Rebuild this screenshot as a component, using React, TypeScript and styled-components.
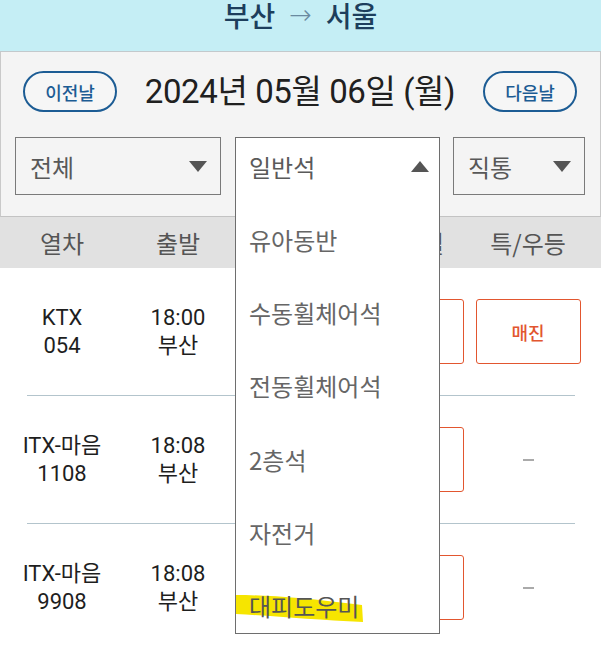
import React from "react";
import styled, { createGlobalStyle } from "styled-components";

const Global = createGlobalStyle`
  html, body { margin: 0; padding: 0; background: #ffffff; }
  body {
    width: 601px;
    height: 645px;
    overflow: hidden;
    font-family: Roboto, "Noto Sans CJK KR", sans-serif;
  }
  * { box-sizing: border-box; }
`;

const Page = styled.div`
  width: 601px;
  display: flex;
  flex-direction: column;
`;

const TitleBar = styled.header`
  height: 52px;
  flex: none;
  background: #c5eef5;
  border-bottom: 1px solid #c3c9cc;
  display: flex;
  justify-content: center;
  align-items: flex-start;
  gap: 10px;
  font-size: 28px;
  line-height: 30px;
  font-weight: 500;
  color: #1d3e5c;
  font-family: "Noto Sans CJK KR", sans-serif;
  overflow: hidden;
`;

const Arrow = styled.span`
  color: #6a8aa0;
  font-weight: 300;
  font-family: "DejaVu Sans", sans-serif;
  font-size: 27px;
  padding: 0 4px;
`;

const Panel = styled.section`
  background: #f4f4f4;
  border-left: 1px solid #c9c9c9;
  border-right: 1px solid #c9c9c9;
  border-bottom: 1px solid #c3c3c3;
  padding: 19px 0 21px;
  display: flex;
  flex-direction: column;
  gap: 25px;
`;

const DateRow = styled.div`
  height: 41px;
  padding: 0 23px 0 22px;
  display: flex;
  align-items: center;
  justify-content: space-between;
`;

const Pill = styled.button`
  width: 94px;
  height: 41px;
  border: 2px solid #1c5c94;
  border-radius: 21px;
  background: #f6f6f6;
  color: #1c5c94;
  font-size: 18px;
  font-weight: 500;
  font-family: "Noto Sans CJK KR", sans-serif;
  padding: 0;
  display: flex;
  align-items: center;
  justify-content: center;
`;

const DateText = styled.div`
  font-size: 33px;
  color: #202020;
  letter-spacing: -0.4px;
  font-family: Roboto, "Noto Sans CJK KR", sans-serif;
  line-height: 41px;
`;

const SelectRow = styled.div`
  padding: 0 13px 0 14px;
  display: grid;
  grid-template-columns: 206px 204px 132px;
  gap: 14px;
  height: 58px;
`;

const SelectBox = styled.div`
  position: relative;
  height: 58px;
  border: 1.5px solid #7a7a7a;
  background: #f4f4f4;
  display: flex;
  align-items: center;
  justify-content: space-between;
  padding: 0 13px 0 14px;
  font-size: 24px;
  color: #585858;
  font-family: "Noto Sans CJK KR", sans-serif;
`;

const Caret = styled.span<{ $up?: boolean }>`
  width: 0;
  height: 0;
  border-left: 9px solid transparent;
  border-right: 9px solid transparent;
  ${(p) =>
    p.$up
      ? "border-bottom: 11px solid #555;"
      : "border-top: 11px solid #555;"}
`;

const SelectSlot = styled.div`
  position: relative;
  height: 58px;
`;

const Dropdown = styled.div`
  position: absolute;
  top: 0;
  left: 0;
  width: 205px;
  height: 497px;
  background: #ffffff;
  border: 1.5px solid #6e6e6e;
  overflow: hidden;
  z-index: 10;
  display: flex;
  flex-direction: column;
  font-family: "Noto Sans CJK KR", sans-serif;
`;

const DropHead = styled.div`
  height: 57px;
  flex: none;
  display: flex;
  align-items: center;
  justify-content: space-between;
  padding: 0 10px 0 13px;
  font-size: 24px;
  color: #5a5a5a;
`;

const DropList = styled.ul`
  list-style: none;
  margin: 0;
  padding: 8px 0 0;
`;

const DropItem = styled.li`
  position: relative;
  height: 73.2px;
  display: flex;
  align-items: center;
  padding-left: 13px;
  font-size: 24px;
  color: #666666;
`;

const ItemLabel = styled.span<{ $marked?: boolean }>`
  position: relative;
  z-index: 1;
  color: ${(p) => (p.$marked ? "#555" : "#666")};
`;

const Marker = styled.svg`
  position: absolute;
  left: 0;
  top: 0;
  z-index: 0;
`;

const TableHead = styled.div`
  height: 51px;
  background: #e1e1e1;
  display: grid;
  grid-template-columns: 116px 116px 116px 118px 116px;
  padding-left: 4px;
  align-items: center;
  font-size: 24px;
  color: #555555;
  font-family: "Noto Sans CJK KR", sans-serif;
`;

const HeadCell = styled.div`
  text-align: center;
  white-space: nowrap;
`;

const Row = styled.div`
  height: 127px;
  display: grid;
  grid-template-columns: 116px 116px 116px 118px 116px;
  padding-left: 4px;
  align-items: center;
`;

const Cell = styled.div`
  display: flex;
  flex-direction: column;
  align-items: center;
  font-size: 22px;
  line-height: 28px;
  color: #1e1e1e;
  font-family: Roboto, "Noto Sans CJK KR", sans-serif;
`;

const SeatButton = styled.button`
  width: 105px;
  height: 65px;
  border: 1.5px solid #e2562f;
  border-radius: 3px;
  background: #ffffff;
  color: #e2562f;
  font-size: 18px;
  font-weight: 500;
  font-family: "Noto Sans CJK KR", sans-serif;
  padding: 0;
  justify-self: center;
`;

const Dash = styled.div`
  justify-self: center;
  width: 11px;
  height: 2px;
  background: #aaaaaa;
`;

const Divider = styled.div`
  height: 1px;
  margin: 0 26px 0 27px;
  background: #b3c4cc;
`;

type Train = {
  name: string;
  no: string;
  dep: string;
  premium: string | null;
};

const trains: Train[] = [
  { name: "KTX", no: "054", dep: "18:00", premium: "매진" },
  { name: "ITX-마음", no: "1108", dep: "18:08", premium: null },
  { name: "ITX-마음", no: "9908", dep: "18:08", premium: null },
];

const seatOptions = ["유아동반", "수동휠체어석", "전동휠체어석", "2층석", "자전거", "대피도우미"];

export default function App() {
  return (
    <Page>
      <Global />
      <TitleBar>
        <span>부산</span>
        <Arrow>→</Arrow>
        <span>서울</span>
      </TitleBar>
      <Panel>
        <DateRow>
          <Pill>이전날</Pill>
          <DateText>2024년 05월 06일 (월)</DateText>
          <Pill>다음날</Pill>
        </DateRow>
        <SelectRow>
          <SelectBox>
            <span>전체</span>
            <Caret />
          </SelectBox>
          <SelectSlot>
            <Dropdown>
              <DropHead>
                <span>일반석</span>
                <Caret $up />
              </DropHead>
              <DropList>
                {seatOptions.map((o) => {
                  const marked = o === "대피도우미";
                  return (
                    <DropItem key={o}>
                      {marked && (
                        <Marker width="130" height="60" viewBox="0 0 130 60">
                          <path
                            d="M0 26 C30 26 70 29 126 36 L127 53 C80 51 40 47 0 45 Z"
                            fill="#f6e500"
                          />
                        </Marker>
                      )}
                      <ItemLabel $marked={marked}>{o}</ItemLabel>
                    </DropItem>
                  );
                })}
              </DropList>
            </Dropdown>
          </SelectSlot>
          <SelectBox>
            <span>직통</span>
            <Caret />
          </SelectBox>
        </SelectRow>
      </Panel>
      <TableHead>
        <HeadCell>열차</HeadCell>
        <HeadCell>출발</HeadCell>
        <HeadCell />
        <HeadCell>일반실</HeadCell>
        <HeadCell>특/우등</HeadCell>
      </TableHead>
      {trains.map((t, i) => (
        <React.Fragment key={t.no}>
          {i > 0 && <Divider />}
          <Row>
            <Cell>
              <span>{t.name}</span>
              <span>{t.no}</span>
            </Cell>
            <Cell>
              <span>{t.dep}</span>
              <span>부산</span>
            </Cell>
            <Cell />
            <SeatButton aria-label="일반실" />
            {t.premium ? <SeatButton>{t.premium}</SeatButton> : <Dash />}
          </Row>
        </React.Fragment>
      ))}
    </Page>
  );
}
